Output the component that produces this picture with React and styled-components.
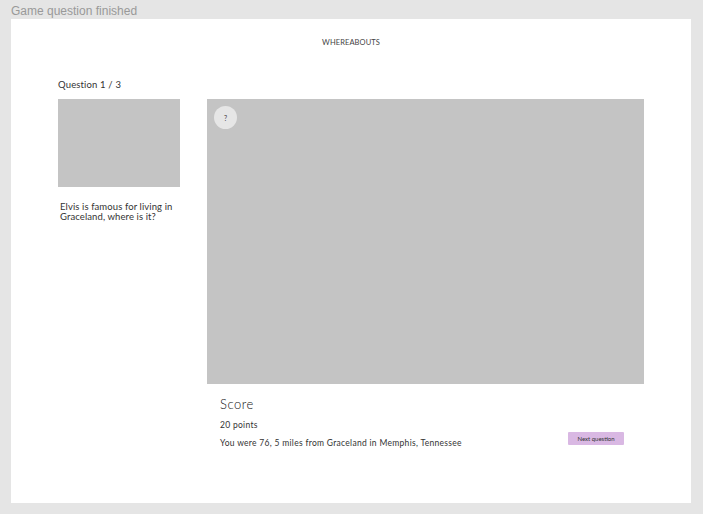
import React from "react";
import styled, { createGlobalStyle } from "styled-components";

const Global = createGlobalStyle`
  html, body { margin: 0; padding: 0; background: #e5e5e5; }
  body { font-family: "Lato", "Liberation Sans", sans-serif; font-weight: 400; }
`;

const Page = styled.div`
  width: 703px;
  height: 514px;
  box-sizing: border-box;
  padding: 3px 0 0 11px;
`;

const FrameLabel = styled.div`
  font-family: "Liberation Sans", Arial, sans-serif;
  font-size: 12px;
  line-height: 16px;
  color: #999999;
  height: 16px;
`;

const Frame = styled.div`
  width: 680px;
  height: 484px;
  background: #ffffff;
  box-sizing: border-box;
  padding: 19px 47px 0;
  display: flex;
  flex-direction: column;
  color: #333;
`;

const Brand = styled.div`
  text-align: center;
  font-size: 7.5px;
  letter-spacing: 0.1px;
  line-height: 10px;
  color: #444;
`;

const Layout = styled.div`
  margin-top: 31px;
  display: grid;
  grid-template-columns: 122px 437px;
  grid-template-rows: 20px auto;
  column-gap: 27px;
`;

const QuestionLabel = styled.div`
  grid-column: 1;
  grid-row: 1;
  font-size: 9.5px;
  letter-spacing: 0.15px;
  line-height: 12px;
  color: #333;
`;

const LeftCol = styled.div`
  grid-column: 1;
  grid-row: 2;
  display: flex;
  flex-direction: column;
`;

const Thumb = styled.div`
  width: 122px;
  height: 88px;
  background: #c4c4c4;
`;

const QuestionText = styled.p`
  margin: 15px 0 0 2px;
  font-size: 9.5px;
  letter-spacing: 0.1px;
  line-height: 9.5px;
  color: #333;
`;

const RightCol = styled.div`
  grid-column: 2;
  grid-row: 2;
  display: flex;
  flex-direction: column;
`;

const Map = styled.div`
  position: relative;
  width: 437px;
  height: 285px;
  background: #c4c4c4;
`;

const Hint = styled.div`
  position: absolute;
  left: 7px;
  top: 7px;
  width: 23px;
  height: 23px;
  border-radius: 50%;
  background: #e6e6e6;
  display: flex;
  align-items: center;
  justify-content: center;
  font-size: 7px;
  color: #444;
`;

const ScoreArea = styled.div`
  padding: 12px 20px 0 13px;
  display: flex;
  align-items: flex-end;
  justify-content: space-between;
`;

const ScoreInfo = styled.div`
  display: flex;
  flex-direction: column;
`;

const ScoreTitle = styled.div`
  font-size: 13px;
  font-weight: 300;
  line-height: 16px;
  letter-spacing: 0.5px;
  color: #111;
`;

const ScoreLine = styled.div`
  font-size: 8.5px;
  letter-spacing: 0.3px;
  line-height: 10px;
  margin-top: ${(p) => p.$gap}px;
  color: #333;
`;

const NextButton = styled.button`
  width: 56px;
  height: 13px;
  margin-bottom: 3px;
  padding: 0;
  border: none;
  border-radius: 1px;
  background: #d9b8e3;
  font-family: "Lato", "Liberation Sans", sans-serif;
  font-size: 6px;
  color: #333;
  cursor: pointer;
`;

export default function App() {
  return (
    <>
      <Global />
      <Page>
        <FrameLabel>Game question finished</FrameLabel>
        <Frame>
          <Brand>WHEREABOUTS</Brand>
          <Layout>
            <QuestionLabel>Question 1 / 3</QuestionLabel>
            <LeftCol>
              <Thumb />
              <QuestionText>
                Elvis is famous for living in
                <br />
                Graceland, where is it?
              </QuestionText>
            </LeftCol>
            <RightCol>
              <Map>
                <Hint>?</Hint>
              </Map>
              <ScoreArea>
                <ScoreInfo>
                  <ScoreTitle>Score</ScoreTitle>
                  <ScoreLine $gap={8}>20 points</ScoreLine>
                  <ScoreLine $gap={8}>
                    You were 76, 5 miles from Graceland in Memphis, Tennessee
                  </ScoreLine>
                </ScoreInfo>
                <NextButton>Next question</NextButton>
              </ScoreArea>
            </RightCol>
          </Layout>
        </Frame>
      </Page>
    </>
  );
}
